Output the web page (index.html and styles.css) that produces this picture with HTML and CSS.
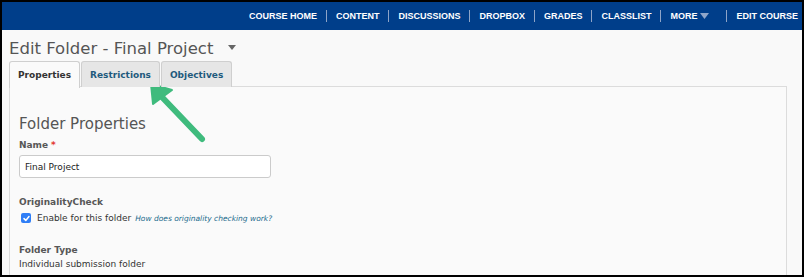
FILE: index.html
```html
<!DOCTYPE html>
<html>
<head>
<meta charset="utf-8">
<link rel="stylesheet" href="styles.css">
</head>
<body>
<div class="frame">
  <nav class="topnav">
    <a>COURSE HOME</a><span class="sep"></span>
    <a>CONTENT</a><span class="sep"></span>
    <a>DISCUSSIONS</a><span class="sep"></span>
    <a>DROPBOX</a><span class="sep"></span>
    <a>GRADES</a><span class="sep"></span>
    <a>CLASSLIST</a><span class="sep"></span>
    <a class="more">MORE <svg class="tri" width="9" height="6" viewBox="0 0 9 6"><path d="M0 0h9L4.5 6z" fill="#8fa6c9"/></svg></a><span class="sep wide"></span>
    <a>EDIT COURSE</a>
  </nav>
  <main class="main">
    <h1 class="title">Edit Folder - Final Project <svg class="caret" width="8" height="5" viewBox="0 0 8 5"><path d="M0 0h8L4 5z" fill="#666"/></svg></h1>
    <div class="tabs">
      <div class="tab active">Properties</div>
      <div class="tab">Restrictions</div>
      <div class="tab">Objectives</div>
    </div>
    <section class="panel">
      <h2 class="heading">Folder Properties</h2>
      <div class="field">
        <div class="label">Name<span class="req">*</span></div>
        <div class="input">Final Project</div>
      </div>
      <div class="field">
        <div class="label">OriginalityCheck</div>
        <div class="check-row">
          <span class="checkbox"><svg width="9" height="9" viewBox="0 0 9 9"><path d="M2 4.6l1.8 1.8L7 2.6" stroke="#fff" stroke-width="1.5" fill="none" stroke-linecap="round" stroke-linejoin="round"/></svg></span>
          <span class="check-text">Enable for this folder</span>
          <a class="help">How does originality checking work?</a>
        </div>
      </div>
      <div class="field">
        <div class="label">Folder Type</div>
        <div class="value">Individual submission folder</div>
      </div>
    </section>
  </main>
  <svg class="arrow" width="804" height="277" viewBox="0 0 804 277">
    <line x1="202" y1="139" x2="160" y2="95" stroke="#3fbb7d" stroke-width="6" stroke-linecap="round"/>
    <path d="M151 84 L153 104 L172 90 Z" fill="#3fbb7d" stroke="#3fbb7d" stroke-width="2" stroke-linejoin="round"/>
  </svg>
</div>
</body>
</html>
```
FILE: styles.css
```css
* { box-sizing: border-box; }
html, body { margin: 0; padding: 0; }
body { width: 804px; height: 277px; overflow: hidden; background: #000; }
.frame {
  position: relative;
  width: 804px;
  height: 277px;
  border: 2px solid #000;
  background: #f9f9f9;
  overflow: hidden;
}
.topnav {
  height: 28px;
  background: #003e8a;
  display: flex;
  justify-content: flex-end;
  align-items: center;
  padding-right: 4px;
  font-family: "Liberation Sans", Arial, sans-serif;
  font-weight: bold;
  font-size: 9px;
  color: #fff;
}
.topnav a { display: inline-flex; align-items: center; }
.topnav .sep {
  display: inline-block;
  width: 1px;
  height: 12px;
  background: #8da4c8;
  margin: 0 9px;
}
.topnav .sep.wide { margin-left: 17px; }
.topnav .tri { margin-left: 3px; }
.main {
  padding: 6px 15px 0 7px;
  font-family: "DejaVu Sans", Verdana, sans-serif;
}
.title {
  margin: 0;
  font-size: 16.5px;
  font-weight: normal;
  color: #555;
  line-height: 22px;
  height: 25px;
  display: flex;
  align-items: center;
}
.title .caret { margin-left: 15px; margin-top: -2px; }
.tabs {
  display: flex;
  gap: 1px;
  height: 26px;
  position: relative;
  z-index: 1;
}
.tab {
  height: 26px;
  padding: 0 8px;
  border: 1px solid #cfcfcf;
  border-bottom: none;
  border-radius: 3px 3px 0 0;
  background: #e6e6e6;
  font-size: 9px;
  font-weight: bold;
  color: #1f5a7d;
  display: flex;
  align-items: center;
}
.tab.active {
  background: #fafafa;
  color: #333;
  height: 27px;
}
.panel {
  border: 1px solid #dcdcdc;
  background: #fafafa;
  margin-top: -1px;
  height: 200px;
  padding: 27px 9px 0;
}
.heading {
  margin: 0 0 4px;
  font-size: 15px;
  font-weight: normal;
  color: #555;
  line-height: 20px;
}
.field { margin-bottom: 17px; }
.label {
  font-size: 9px;
  font-weight: bold;
  color: #575757;
  line-height: 14px;
}
.req { color: #e2372f; margin-left: 3px; }
.input {
  width: 252px;
  height: 23px;
  margin-top: 3px;
  border: 1px solid #cbcbcb;
  border-radius: 3px;
  background: #fff;
  font-size: 9px;
  color: #222;
  padding: 0 5px;
  display: flex;
  align-items: center;
}
.check-row {
  display: flex;
  align-items: center;
  margin-top: 1px;
  padding-left: 2px;
  height: 16px;
}
.checkbox {
  width: 10px;
  height: 10px;
  border-radius: 2px;
  background: #2f7ef6;
  display: inline-flex;
  align-items: center;
  justify-content: center;
  margin-right: 6px;
}
.check-text { font-size: 9px; color: #333; margin-right: 4px; }
.help {
  font-size: 7.5px;
  font-style: italic;
  color: #1b6a8c;
}
.value { font-size: 9px; color: #333; line-height: 14px; }
.arrow {
  position: absolute;
  left: -2px;
  top: -2px;
  pointer-events: none;
}
```
